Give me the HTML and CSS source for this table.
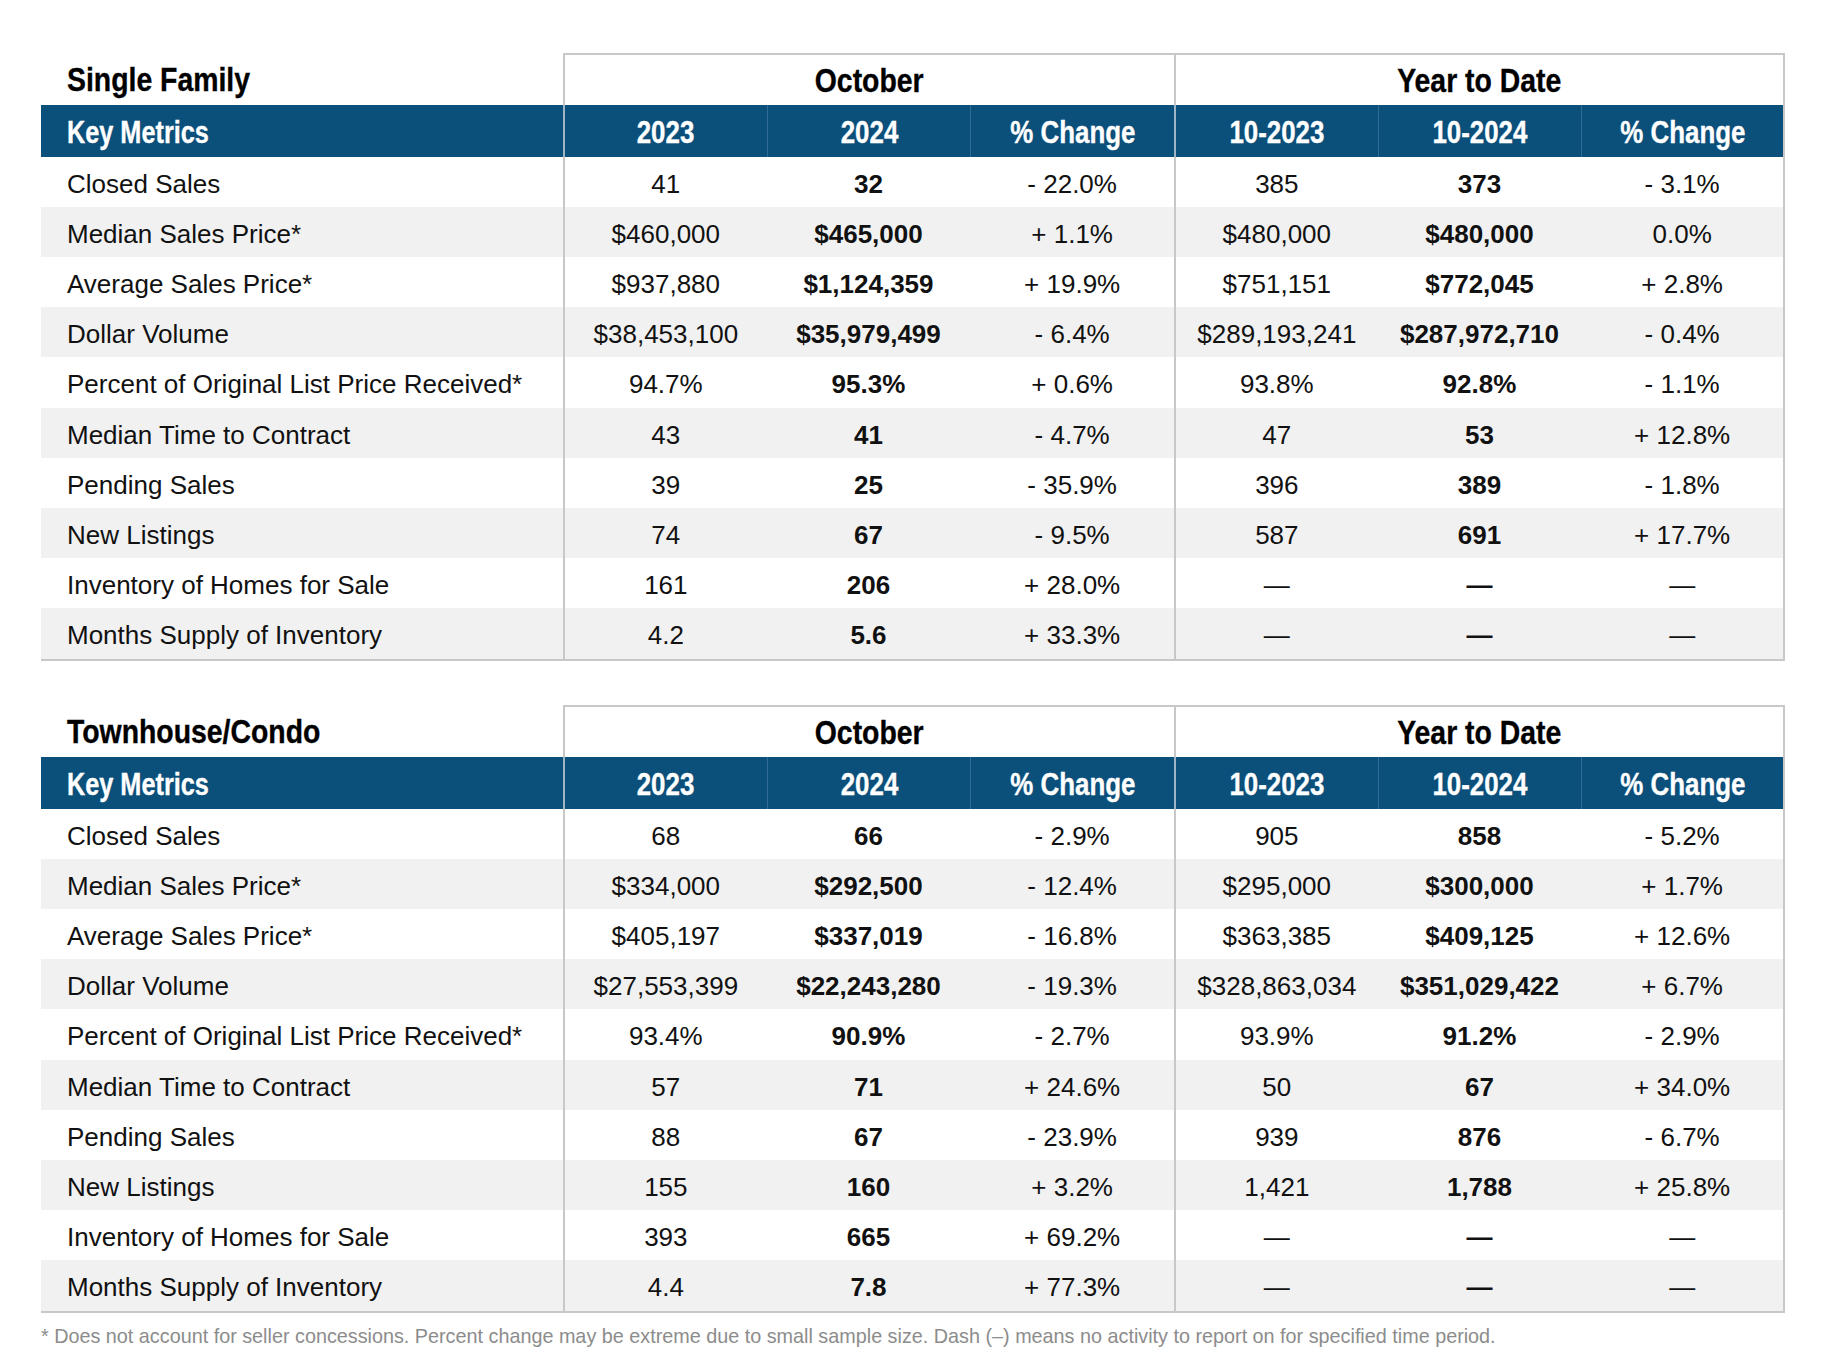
FILE: index.html
```html
<!DOCTYPE html>
<html lang="en">
<head>
<meta charset="utf-8">
<title>Market Report</title>
<link rel="stylesheet" href="styles.css">
</head>
<body>
<div class="page">
  <table class="report">
    <colgroup>
      <col class="c-metric"><col class="c-num"><col class="c-num"><col class="c-num"><col class="c-num"><col class="c-num"><col class="c-num">
    </colgroup>
    <thead>
      <tr class="title-row">
        <th class="title"><span class="cond">Single Family</span></th>
        <th colspan="3" class="group grp-l"><span class="cond">October</span></th>
        <th colspan="3" class="group grp-l grp-r"><span class="cond">Year to Date</span></th>
      </tr>
      <tr class="head-row">
        <th class="km"><span class="cond">Key Metrics</span></th>
        <th class="sep-l"><span class="cond">2023</span></th><th class="in"><span class="cond">2024</span></th><th class="in"><span class="cond">% Change</span></th>
        <th class="sep-l"><span class="cond">10-2023</span></th><th class="in"><span class="cond">10-2024</span></th><th class="in sep-r"><span class="cond">% Change</span></th>
      </tr>
    </thead>
    <tbody>
      <tr><td class="metric">Closed Sales</td><td class="sep-l">41</td><td class="b">32</td><td>- 22.0%</td><td class="sep-l">385</td><td class="b">373</td><td class="sep-r">- 3.1%</td></tr>
      <tr><td class="metric">Median Sales Price*</td><td class="sep-l">$460,000</td><td class="b">$465,000</td><td>+ 1.1%</td><td class="sep-l">$480,000</td><td class="b">$480,000</td><td class="sep-r">0.0%</td></tr>
      <tr><td class="metric">Average Sales Price*</td><td class="sep-l">$937,880</td><td class="b">$1,124,359</td><td>+ 19.9%</td><td class="sep-l">$751,151</td><td class="b">$772,045</td><td class="sep-r">+ 2.8%</td></tr>
      <tr><td class="metric">Dollar Volume</td><td class="sep-l">$38,453,100</td><td class="b">$35,979,499</td><td>- 6.4%</td><td class="sep-l">$289,193,241</td><td class="b">$287,972,710</td><td class="sep-r">- 0.4%</td></tr>
      <tr><td class="metric">Percent of Original List Price Received*</td><td class="sep-l">94.7%</td><td class="b">95.3%</td><td>+ 0.6%</td><td class="sep-l">93.8%</td><td class="b">92.8%</td><td class="sep-r">- 1.1%</td></tr>
      <tr><td class="metric">Median Time to Contract</td><td class="sep-l">43</td><td class="b">41</td><td>- 4.7%</td><td class="sep-l">47</td><td class="b">53</td><td class="sep-r">+ 12.8%</td></tr>
      <tr><td class="metric">Pending Sales</td><td class="sep-l">39</td><td class="b">25</td><td>- 35.9%</td><td class="sep-l">396</td><td class="b">389</td><td class="sep-r">- 1.8%</td></tr>
      <tr><td class="metric">New Listings</td><td class="sep-l">74</td><td class="b">67</td><td>- 9.5%</td><td class="sep-l">587</td><td class="b">691</td><td class="sep-r">+ 17.7%</td></tr>
      <tr><td class="metric">Inventory of Homes for Sale</td><td class="sep-l">161</td><td class="b">206</td><td>+ 28.0%</td><td class="sep-l">&mdash;</td><td class="b">&mdash;</td><td class="sep-r">&mdash;</td></tr>
      <tr><td class="metric">Months Supply of Inventory</td><td class="sep-l">4.2</td><td class="b">5.6</td><td>+ 33.3%</td><td class="sep-l">&mdash;</td><td class="b">&mdash;</td><td class="sep-r">&mdash;</td></tr>
    </tbody>
  </table>

  <table class="report">
    <colgroup>
      <col class="c-metric"><col class="c-num"><col class="c-num"><col class="c-num"><col class="c-num"><col class="c-num"><col class="c-num">
    </colgroup>
    <thead>
      <tr class="title-row">
        <th class="title"><span class="cond">Townhouse/Condo</span></th>
        <th colspan="3" class="group grp-l"><span class="cond">October</span></th>
        <th colspan="3" class="group grp-l grp-r"><span class="cond">Year to Date</span></th>
      </tr>
      <tr class="head-row">
        <th class="km"><span class="cond">Key Metrics</span></th>
        <th class="sep-l"><span class="cond">2023</span></th><th class="in"><span class="cond">2024</span></th><th class="in"><span class="cond">% Change</span></th>
        <th class="sep-l"><span class="cond">10-2023</span></th><th class="in"><span class="cond">10-2024</span></th><th class="in sep-r"><span class="cond">% Change</span></th>
      </tr>
    </thead>
    <tbody>
      <tr><td class="metric">Closed Sales</td><td class="sep-l">68</td><td class="b">66</td><td>- 2.9%</td><td class="sep-l">905</td><td class="b">858</td><td class="sep-r">- 5.2%</td></tr>
      <tr><td class="metric">Median Sales Price*</td><td class="sep-l">$334,000</td><td class="b">$292,500</td><td>- 12.4%</td><td class="sep-l">$295,000</td><td class="b">$300,000</td><td class="sep-r">+ 1.7%</td></tr>
      <tr><td class="metric">Average Sales Price*</td><td class="sep-l">$405,197</td><td class="b">$337,019</td><td>- 16.8%</td><td class="sep-l">$363,385</td><td class="b">$409,125</td><td class="sep-r">+ 12.6%</td></tr>
      <tr><td class="metric">Dollar Volume</td><td class="sep-l">$27,553,399</td><td class="b">$22,243,280</td><td>- 19.3%</td><td class="sep-l">$328,863,034</td><td class="b">$351,029,422</td><td class="sep-r">+ 6.7%</td></tr>
      <tr><td class="metric">Percent of Original List Price Received*</td><td class="sep-l">93.4%</td><td class="b">90.9%</td><td>- 2.7%</td><td class="sep-l">93.9%</td><td class="b">91.2%</td><td class="sep-r">- 2.9%</td></tr>
      <tr><td class="metric">Median Time to Contract</td><td class="sep-l">57</td><td class="b">71</td><td>+ 24.6%</td><td class="sep-l">50</td><td class="b">67</td><td class="sep-r">+ 34.0%</td></tr>
      <tr><td class="metric">Pending Sales</td><td class="sep-l">88</td><td class="b">67</td><td>- 23.9%</td><td class="sep-l">939</td><td class="b">876</td><td class="sep-r">- 6.7%</td></tr>
      <tr><td class="metric">New Listings</td><td class="sep-l">155</td><td class="b">160</td><td>+ 3.2%</td><td class="sep-l">1,421</td><td class="b">1,788</td><td class="sep-r">+ 25.8%</td></tr>
      <tr><td class="metric">Inventory of Homes for Sale</td><td class="sep-l">393</td><td class="b">665</td><td>+ 69.2%</td><td class="sep-l">&mdash;</td><td class="b">&mdash;</td><td class="sep-r">&mdash;</td></tr>
      <tr><td class="metric">Months Supply of Inventory</td><td class="sep-l">4.4</td><td class="b">7.8</td><td>+ 77.3%</td><td class="sep-l">&mdash;</td><td class="b">&mdash;</td><td class="sep-r">&mdash;</td></tr>
    </tbody>
  </table>

  <p class="footnote">* Does not account for seller concessions. Percent change may be extreme due to small sample size. Dash (&ndash;) means no activity to report on for specified time period.</p>
</div>
</body>
</html>
```

FILE: styles.css
```css
* { box-sizing: border-box; }

html, body {
  margin: 0;
  padding: 0;
  background: #ffffff;
}

body {
  font-family: "Liberation Sans", Arial, Helvetica, sans-serif;
  color: #111111;
}

.page {
  width: 1832px;
  padding: 53px 0 0 41px;
}

.report {
  width: 1744px;
  table-layout: fixed;
  border-collapse: separate;
  border-spacing: 0;
}

.report + .report {
  margin-top: 44px;
}

col.c-metric { width: 522px; }
col.c-num { width: 203.67px; }

th, td {
  padding: 0;
  text-align: center;
  vertical-align: middle;
  white-space: nowrap;
}

/* condensed heading text (no condensed face installed) */
.cond {
  display: inline-block;
  transform: scaleX(0.835);
  transform-origin: center center;
  -webkit-text-stroke: 0.35px currentColor;
}

.title .cond,
.km .cond {
  transform-origin: left center;
}

/* title row */
.title-row th {
  height: 52px;
  font-weight: bold;
  font-size: 34px;
  color: #000000;
  padding-top: 1px;
}

.title-row th.title {
  text-align: left;
  padding-left: 26px;
}

.grp-l {
  border-top: 2px solid #c8c8c8;
  border-left: 2px solid #c8c8c8;
}

.grp-r {
  border-right: 2px solid #c8c8c8;
}

/* blue header */
.head-row th {
  height: 52px;
  background: #0b4f7b;
  color: #ffffff;
  font-weight: bold;
  font-size: 31px;
  padding-top: 4px;
}

.head-row th.km {
  text-align: left;
  padding-left: 26px;
}

.head-row th.km .cond {
  transform: scaleX(0.815);
}

.head-row th.in {
  border-left: 1px solid #2f6b93;
}

.head-row th.sep-l {
  border-left: 2px solid #9fb4c4;
}

.head-row th.sep-r {
  border-right: 2px solid #c8c8c8;
}

/* body rows */
tbody td {
  height: 50px;
  font-size: 26px;
  padding-top: 4px;
}

tbody tr:nth-child(5) td {
  height: 51px;
}

tbody tr:nth-child(even) td {
  background: #f1f1f1;
}

tbody td.metric {
  text-align: left;
  padding-left: 26px;
}

tbody td.sep-l {
  border-left: 2px solid #c8c8c8;
}

tbody td.sep-r {
  border-right: 2px solid #c8c8c8;
}

tbody td.b {
  font-weight: bold;
}

tbody tr:last-child td {
  height: 53px;
  border-bottom: 2px solid #c8c8c8;
}

.footnote {
  margin: 12px 0 0 0;
  font-size: 19.8px;
  color: #8c8c8c;
}
```
